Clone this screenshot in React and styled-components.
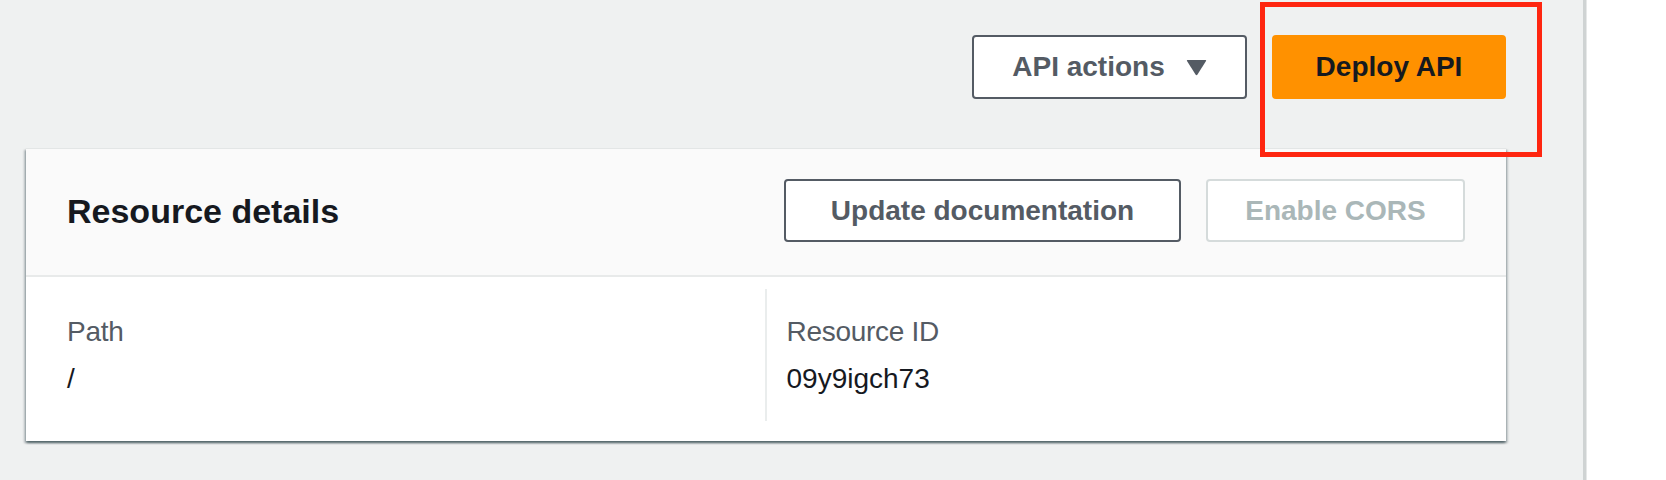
import React from "react";
import styled, { createGlobalStyle } from "styled-components";

const Global = createGlobalStyle`
  html, body { margin: 0; padding: 0; }
  body {
    font-family: "Liberation Sans", Arial, sans-serif;
    background: #ffffff;
  }
  * { box-sizing: border-box; }
`;

const Page = styled.div`
  display: flex;
  min-height: 480px;
  width: 1666px;
`;

const Main = styled.main`
  flex: 0 0 1583px;
  background: #eff1f1;
  padding: 35px 77px 0 26px;
  min-height: 480px;
`;

const SidePanel = styled.aside`
  flex: 1;
  background: #ffffff;
  border-left: 3px solid #cfd3d3;
  box-shadow: inset 1px 0 0 #e6e8e8;
`;

const ActionBar = styled.div`
  display: flex;
  justify-content: flex-end;
  align-items: center;
  gap: 25px;
  margin-bottom: 49px;
`;

const Button = styled.button`
  display: inline-flex;
  align-items: center;
  justify-content: center;
  gap: 21px;
  width: ${(p) => p.$w}px;
  height: ${(p) => p.$h || 63}px;
  padding: 0;
  border-radius: 4px;
  border: 2px solid
    ${(p) =>
      p.$variant === "primary"
        ? "#ff9100"
        : p.$variant === "disabled"
        ? "#d5dbdb"
        : "#545b64"};
  background: ${(p) => (p.$variant === "primary" ? "#ff9100" : "#ffffff")};
  color: ${(p) =>
    p.$variant === "primary"
      ? "#16191f"
      : p.$variant === "disabled"
      ? "#aab7b8"
      : "#545b64"};
  font-family: "Liberation Sans", Arial, sans-serif;
  font-weight: 700;
  font-size: 28px;
  line-height: 40px;
  cursor: ${(p) => (p.$variant === "disabled" ? "default" : "pointer")};
`;

const Caret = styled.svg`
  width: 21px;
  height: 17px;
  flex: none;
`;

const HighlightWrap = styled.div`
  position: relative;
  display: flex;
`;

const Highlight = styled.div`
  position: absolute;
  top: -33px;
  left: -12px;
  right: -36px;
  bottom: -58px;
  border: 5px solid #fe2610;
  pointer-events: none;
`;

const Card = styled.section`
  background: #ffffff;
  border-top: 1px solid #e3e6e6;
  box-shadow: 0 2px 2px 0 rgba(0, 28, 36, 0.45),
    2px 2px 2px 0 rgba(0, 28, 36, 0.18), -2px 2px 2px 0 rgba(0, 28, 36, 0.22);
`;

const CardHeader = styled.header`
  display: flex;
  align-items: center;
  justify-content: space-between;
  height: 128px;
  padding: 0 41px 3px;
  background: #fafafa;
  border-bottom: 2px solid #e8eaea;
`;

const Title = styled.h2`
  margin: 0;
  font-size: 34px;
  line-height: 44px;
  font-weight: 700;
  color: #16191f;
`;

const HeaderActions = styled.div`
  display: flex;
  gap: 25px;
`;

const CardBody = styled.div`
  display: grid;
  grid-template-columns: 1fr 1fr;
  padding: 12px 44px 20px 41px;
`;

const Column = styled.div`
  padding: 21px 0 20px ${(p) => (p.$divided ? "20px" : "0")};
  border-left: ${(p) => (p.$divided ? "2px solid #eaeded" : "none")};
`;

const Label = styled.div`
  font-size: 28px;
  line-height: 44px;
  color: #545b64;
  margin-bottom: 3px;
  letter-spacing: -0.3px;
`;

const Value = styled.div`
  font-size: 28px;
  line-height: 44px;
  color: #16191f;
`;

export default function App() {
  return (
    <>
      <Global />
      <Page>
        <Main>
          <ActionBar>
            <Button $w={275} $h={64}>
              API actions
              <Caret viewBox="0 0 21 17" aria-hidden="true">
                <path
                  d="M1.5 1 H19.5 Q20.6 1 20 2 L11.5 15.6 Q10.5 17 9.5 15.6 L1 2 Q0.4 1 1.5 1 Z"
                  fill="#545b64"
                />
              </Caret>
            </Button>
            <HighlightWrap>
              <Button $w={234} $h={64} $variant="primary">
                Deploy API
              </Button>
              <Highlight />
            </HighlightWrap>
          </ActionBar>
          <Card>
            <CardHeader>
              <Title>Resource details</Title>
              <HeaderActions>
                <Button $w={397}>Update documentation</Button>
                <Button $w={259} $variant="disabled">
                  Enable CORS
                </Button>
              </HeaderActions>
            </CardHeader>
            <CardBody>
              <Column>
                <Label>Path</Label>
                <Value>/</Value>
              </Column>
              <Column $divided>
                <Label>Resource ID</Label>
                <Value>09y9igch73</Value>
              </Column>
            </CardBody>
          </Card>
        </Main>
        <SidePanel />
      </Page>
    </>
  );
}
